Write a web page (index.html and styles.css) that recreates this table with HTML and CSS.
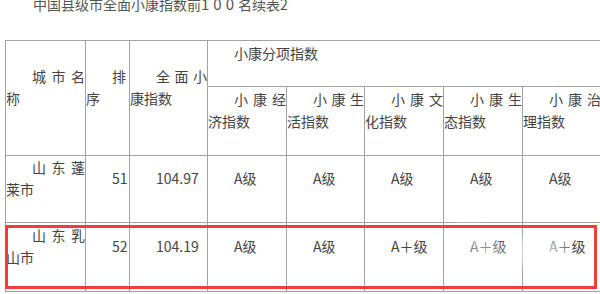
FILE: index.html
```html
<!DOCTYPE html>
<html lang="zh">
<head>
<meta charset="utf-8">
<link rel="stylesheet" href="styles.css">
</head>
<body>
<div class="page">
  <div class="title">中国县级市全面小康指数前<span class="num">100</span>名续表2</div>
  <table class="grid">
    <colgroup>
      <col class="c1"><col class="c2"><col class="c3"><col class="c4"><col class="c5"><col class="c6"><col class="c7"><col class="c8">
    </colgroup>
    <tr class="r1">
      <td rowspan="2">城市名称</td>
      <td rowspan="2">排序</td>
      <td rowspan="2">全面小康指数</td>
      <td colspan="5">小康分项指数</td>
    </tr>
    <tr class="r2">
      <td>小康经济指数</td>
      <td>小康生活指数</td>
      <td>小康文化指数</td>
      <td>小康生态指数</td>
      <td>小康治理指数</td>
    </tr>
    <tr class="r3">
      <td>山东蓬莱市</td>
      <td>51</td>
      <td>104.97</td>
      <td>A级</td>
      <td>A级</td>
      <td>A级</td>
      <td>A级</td>
      <td>A级</td>
    </tr>
    <tr class="r4">
      <td>山东乳山市</td>
      <td>52</td>
      <td>104.19</td>
      <td>A级</td>
      <td>A级</td>
      <td>A＋级</td>
      <td>A＋级</td>
      <td>A＋级</td>
    </tr>
  </table>
  <div class="watermark"></div>
  <div class="highlight"></div>
</div>
</body>
</html>
```

FILE: styles.css
```css
html, body {
  margin: 0;
  padding: 0;
  background: #ffffff;
  overflow: hidden;
}
.page {
  position: relative;
  width: 600px;
  height: 294px;
  overflow: hidden;
  font-family: "Noto Sans CJK SC", "Noto Sans", sans-serif;
  font-size: 14px;
  line-height: 22px;
  color: #444444;
}
.title {
  margin: -7px 0 25px 5px;
  text-indent: 28px;
  color: #555555;
  white-space: nowrap;
}
.title .num {
  letter-spacing: 4px;
  font-size: 15px;
}
.grid {
  margin-left: 5px;
  border-collapse: collapse;
  table-layout: fixed;
  width: 596px;
}
.c1 { width: 80px; }
.c2 { width: 44px; }
.c3 { width: 78px; }
.c4 { width: 79px; }
.c5 { width: 78px; }
.c6 { width: 79px; }
.c7 { width: 79px; }
.c8 { width: 79px; }
.grid td {
  border: 1px solid #a3a3a3;
  padding: 0 0 22px 0;
  text-align: justify;
  text-indent: 26px;
  vertical-align: middle;
  word-break: break-all;
}
.r1 { height: 46px; }
.r2 { height: 69px; }
.r3 { height: 67px; }
.r4 { height: 69px; }
.watermark {
  position: absolute;
  left: 420px;
  top: 222px;
  width: 150px;
  height: 60px;
  background:
    radial-gradient(ellipse 22px 16px at 50px 12px, rgba(255,255,255,0.85), rgba(255,255,255,0) 100%),
    radial-gradient(ellipse 40px 22px at 120px 30px, rgba(255,255,255,0.9), rgba(255,255,255,0) 100%),
    radial-gradient(ellipse 30px 20px at 65px 30px, rgba(255,255,255,0.55), rgba(255,255,255,0) 100%);
  pointer-events: none;
}
.highlight {
  position: absolute;
  left: 5px;
  top: 225px;
  width: 586px;
  height: 58px;
  border: 3px solid #f03c3c;
  pointer-events: none;
}
```
